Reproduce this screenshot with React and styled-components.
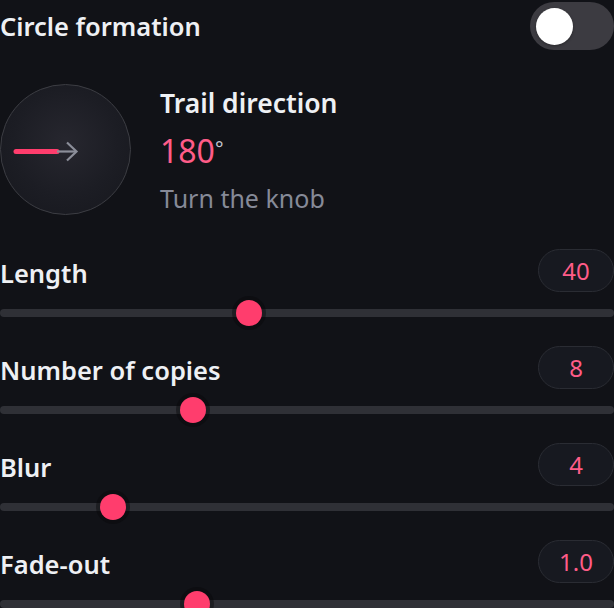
import React from 'react';
import styled, { createGlobalStyle } from 'styled-components';

const Global = createGlobalStyle`
  html, body {
    margin: 0;
    background: #111217;
  }
  body {
    font-family: "Noto Sans", "DejaVu Sans", sans-serif;
    color: #eef0f4;
    overflow: hidden;
  }
`

const Panel = styled.div`
  width: 614px;
  padding-top: 2px;
  display: flex;
  flex-direction: column;
`
const ToggleRow = styled.div`
  display: flex;
  justify-content: space-between;
  align-items: center;
  height: 48px;
`
const Label = styled.div`
  font-size: 25.5px;
  font-weight: 600;
`
const FieldLabel = styled(Label)`
  padding-top: 5px;
`
const Toggle = styled.div`
  width: 84px;
  height: 48px;
  border-radius: 24px;
  background: #3c3b41;
  display: flex;
  align-items: center;
  padding: 0 6px;
  box-sizing: border-box;
  justify-content: ${p => (p.on ? 'flex-end' : 'flex-start')};
`
const Thumb = styled.div`
  width: 37px;
  height: 37px;
  border-radius: 50%;
  background: #fff;
  box-shadow: 0 1px 3px rgba(0, 0, 0, 0.35);
`
const KnobRow = styled.div`
  display: flex;
  align-items: center;
  gap: 29px;
  margin-top: 34px;
  height: 131px;
`
const Knob = styled.div`
  width: 131px;
  height: 131px;
  border-radius: 50%;
  box-sizing: border-box;
  border: 1.5px solid #3c3d43;
  background: radial-gradient(circle at 50% 45%, #27272f 0%, #1c1d24 55%, #16171d 100%);
  display: flex;
`
const KnobText = styled.div`
  display: flex;
  flex-direction: column;
  gap: 9px;
`
const Title = styled.div`
  font-size: 26.5px;
  font-weight: 600;
  line-height: 36px;
`
const Degrees = styled.div`
  font-size: 32px;
  line-height: 42px;
  color: #ff5c88;
  display: flex;
  align-items: flex-start;
`
const Deg = styled.span`
  font-size: 20px;
  line-height: 30px;
  margin-top: 4px;
  color: #c4c7d0;
`
const Hint = styled.div`
  font-size: 25px;
  line-height: 34px;
  color: #868a98;
`
const Sliders = styled.div`
  display: flex;
  flex-direction: column;
  gap: 20px;
  margin-top: 34px;
`
const Field = styled.div`
  display: flex;
  flex-direction: column;
  gap: 8px;
`
const FieldHead = styled.div`
  display: flex;
  justify-content: space-between;
  align-items: center;
  height: 43px;
`
const Badge = styled.div`
  width: 76px;
  height: 43px;
  box-sizing: border-box;
  border-radius: 22px;
  border: 1.5px solid #2a2c33;
  background: #171920;
  color: #ff5c88;
  font-size: 24px;
  display: flex;
  align-items: center;
  justify-content: center;
`
const Track = styled.div`
  position: relative;
  height: 26px;
  display: flex;
  align-items: center;
  &::before {
    content: '';
    flex: 1;
    height: 8px;
    border-radius: 4px;
    background: #2f3036;
  }
`
const Handle = styled.div`
  position: absolute;
  top: 0;
  width: 26px;
  height: 26px;
  margin-left: -13px;
  border-radius: 50%;
  background: #ff3d6d;
  box-shadow: 0 0 0 4px rgba(8, 8, 12, 0.45);
`

const fields = [
  { label: 'Length', value: '40', pos: 0.401 },
  { label: 'Number of copies', value: '8', pos: 0.306 },
  { label: 'Blur', value: '4', pos: 0.17 },
  { label: 'Fade-out', value: '1.0', pos: 0.313 },
]

const App = () => {
  return (
    <Panel>
      <Global />
      <ToggleRow>
        <Label>Circle formation</Label>
        <Toggle on={false}>
          <Thumb />
        </Toggle>
      </ToggleRow>
      <KnobRow>
        <Knob>
          <svg width="128" height="128" viewBox="0 0 128 128">
            <line x1="15" y1="66.5" x2="56" y2="66.5" stroke="#ff3d6d" strokeWidth="5" strokeLinecap="round" />
            <line x1="56" y1="66.5" x2="75" y2="66.5" stroke="#8b8e99" strokeWidth="2.2" />
            <polyline points="66,57.5 75.5,66.5 66,75.5" fill="none" stroke="#8b8e99" strokeWidth="2.2" />
          </svg>
        </Knob>
        <KnobText>
          <Title>Trail direction</Title>
          <Degrees>180<Deg>°</Deg></Degrees>
          <Hint>Turn the knob</Hint>
        </KnobText>
      </KnobRow>
      <Sliders>
        {fields.map(f => (
          <Field key={f.label}>
            <FieldHead>
              <FieldLabel>{f.label}</FieldLabel>
              <Badge>{f.value}</Badge>
            </FieldHead>
            <Track>
              <Handle style={{ left: `calc(13px + ${f.pos} * (100% - 26px))` }} />
            </Track>
          </Field>
        ))}
      </Sliders>
    </Panel>
  );
};

export default App;
